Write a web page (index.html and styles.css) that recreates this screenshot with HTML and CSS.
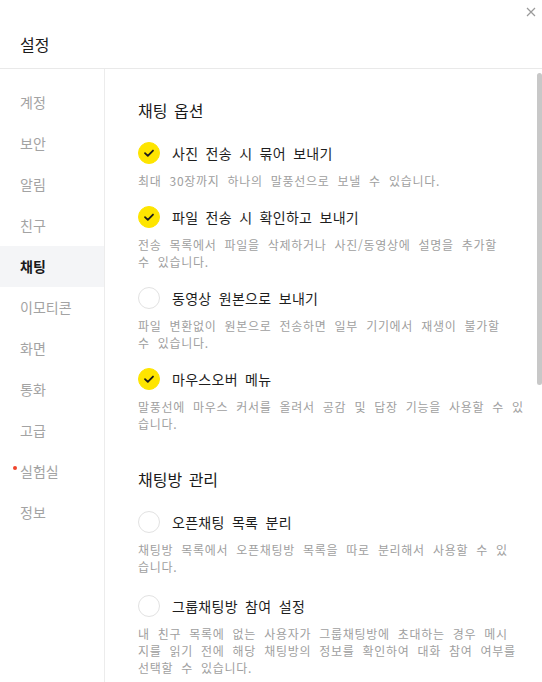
FILE: index.html
```html
<!DOCTYPE html>
<html lang="ko">
<head>
  <meta charset="UTF-8">
  <meta name="viewport" content="width=device-width, initial-scale=1.0">
  <title>설정</title>
  <link rel="stylesheet" href="styles.css">
</head>
<body>
  <div class="window">
    <div class="header">
      <div class="header-top">
        <button class="close" aria-label="닫기">
          <svg width="10" height="10" viewBox="0 0 10 10"><path d="M1 1L9 9M9 1L1 9" stroke="#9a9a9a" stroke-width="1.2" fill="none"/></svg>
        </button>
      </div>
      <div class="title">설정</div>
    </div>

    <div class="main">
      <ul class="sidebar">
        <li>계정</li>
        <li>보안</li>
        <li>알림</li>
        <li>친구</li>
        <li class="active">채팅</li>
        <li>이모티콘</li>
        <li>화면</li>
        <li>통화</li>
        <li>고급</li>
        <li class="new">실험실</li>
        <li>정보</li>
      </ul>

      <div class="content">
        <h2 class="section-title">채팅 옵션</h2>

        <div class="option">
          <div class="option-row">
            <span class="check on"><svg width="22" height="22" viewBox="0 0 22 22"><path d="M6.6 11.2L9.7 14.2L15.4 8.3" stroke="#1c1c1c" stroke-width="2" fill="none" stroke-linecap="round" stroke-linejoin="round"/></svg></span>
            <span class="label">사진 전송 시 묶어 보내기</span>
          </div>
          <p class="desc">최대 30장까지 하나의 말풍선으로 보낼 수 있습니다.</p>
        </div>

        <div class="option">
          <div class="option-row">
            <span class="check on"><svg width="22" height="22" viewBox="0 0 22 22"><path d="M6.6 11.2L9.7 14.2L15.4 8.3" stroke="#1c1c1c" stroke-width="2" fill="none" stroke-linecap="round" stroke-linejoin="round"/></svg></span>
            <span class="label">파일 전송 시 확인하고 보내기</span>
          </div>
          <p class="desc">전송 목록에서 파일을 삭제하거나 사진/동영상에 설명을 추가할<br>수 있습니다.</p>
        </div>

        <div class="option">
          <div class="option-row">
            <span class="check"></span>
            <span class="label">동영상 원본으로 보내기</span>
          </div>
          <p class="desc">파일 변환없이 원본으로 전송하면 일부 기기에서 재생이 불가할<br>수 있습니다.</p>
        </div>

        <div class="option">
          <div class="option-row">
            <span class="check on"><svg width="22" height="22" viewBox="0 0 22 22"><path d="M6.6 11.2L9.7 14.2L15.4 8.3" stroke="#1c1c1c" stroke-width="2" fill="none" stroke-linecap="round" stroke-linejoin="round"/></svg></span>
            <span class="label">마우스오버 메뉴</span>
          </div>
          <p class="desc">말풍선에 마우스 커서를 올려서 공감 및 답장 기능을 사용할 수 있<br>습니다.</p>
        </div>

        <h2 class="section-title second">채팅방 관리</h2>

        <div class="option">
          <div class="option-row">
            <span class="check"></span>
            <span class="label">오픈채팅 목록 분리</span>
          </div>
          <p class="desc">채팅방 목록에서 오픈채팅방 목록을 따로 분리해서 사용할 수 있<br>습니다.</p>
        </div>

        <div class="option last">
          <div class="option-row">
            <span class="check"></span>
            <span class="label">그룹채팅방 참여 설정</span>
          </div>
          <p class="desc">내 친구 목록에 없는 사용자가 그룹채팅방에 초대하는 경우 메시<br>지를 읽기 전에 해당 채팅방의 정보를 확인하여 대화 참여 여부를<br>선택할 수 있습니다.</p>
        </div>
      </div>

      <div class="scroll-thumb"></div>
    </div>
  </div>
</body>
</html>
```

FILE: styles.css
```css
* {
  box-sizing: border-box;
}
body {
  margin: 0;
  background-color: #fff;
  font-family: "Noto Sans CJK KR", "Noto Sans", sans-serif;
  color: #1e1e1e;
}
.window {
  width: 542px;
  height: 682px;
  overflow: hidden;
  display: flex;
  flex-direction: column;
}
.header {
  height: 69px;
  border-bottom: 1px solid #e9e9e9;
  flex-shrink: 0;
}
.header-top {
  height: 21px;
  display: flex;
  justify-content: flex-end;
  padding: 5px 4px 0 0;
}
.close {
  width: 14px;
  height: 14px;
  padding: 2px;
  border: none;
  background: none;
  display: flex;
  align-items: center;
  justify-content: center;
  cursor: pointer;
}
.title {
  padding-left: 20px;
  margin-top: 12px;
  font-size: 16px;
  line-height: 22px;
  color: #1a1a1a;
}
.main {
  flex: 1;
  display: flex;
  position: relative;
  min-height: 0;
}
.sidebar {
  list-style: none;
  margin: 0;
  padding: 13px 0 0;
  width: 105px;
  flex-shrink: 0;
  border-right: 1px solid #ececec;
}
.sidebar li {
  height: 41px;
  line-height: 41px;
  padding-left: 20px;
  font-size: 14px;
  color: #a3a3a3;
  position: relative;
}
.sidebar li.active {
  background-color: #f4f5f7;
  color: #1a1a1a;
  font-weight: bold;
}
.sidebar li.new::before {
  content: "";
  position: absolute;
  left: 13px;
  top: 15px;
  width: 4px;
  height: 4px;
  border-radius: 50%;
  background-color: #f0442c;
}
.content {
  flex: 1;
  padding: 30px 20px 0 33px;
}
.section-title {
  margin: 0;
  font-size: 16px;
  line-height: 22px;
  font-weight: normal;
  color: #1a1a1a;
  word-spacing: 2px;
}
.section-title.second {
  margin-top: 36px;
}
.option {
  margin-top: 17px;
}
.option.last {
  margin-top: 20px;
}
.section-title + .option {
  margin-top: 21px;
}
.option-row {
  display: flex;
  align-items: center;
  height: 22px;
}
.check {
  width: 22px;
  height: 22px;
  border-radius: 50%;
  border: 1px solid #e2e2e2;
  flex-shrink: 0;
  display: flex;
  align-items: center;
  justify-content: center;
  margin-right: 12px;
}
.check.on {
  background-color: #fee500;
  border-color: #fee500;
}
.check svg {
  display: block;
}
.label {
  font-size: 14px;
  line-height: 20px;
  color: #1e1e1e;
  word-spacing: 3px;
  letter-spacing: 0.3px;
}
.desc {
  margin: 8px 0 0;
  font-size: 12px;
  line-height: 17px;
  color: #a0a0a0;
  white-space: nowrap;
  word-spacing: 4px;
  letter-spacing: 0.7px;
}
.scroll-thumb {
  position: absolute;
  right: 0;
  top: 4px;
  width: 5px;
  height: 312px;
  border-radius: 3px;
  background-color: #c8c8c8;
}
```
